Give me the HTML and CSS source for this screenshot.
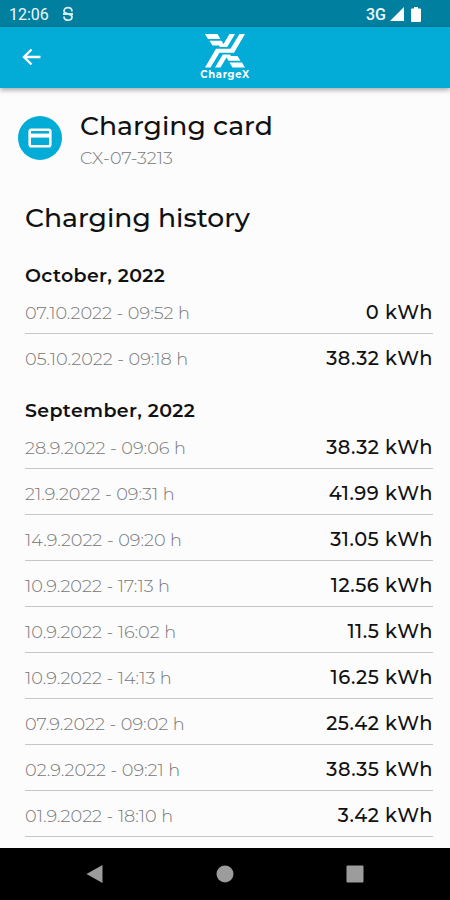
FILE: index.html
```html
<!DOCTYPE html>
<html lang="en">
<head>
  <meta charset="UTF-8">
  <title>ChargeX - Charging card</title>
  <link rel="stylesheet" href="styles.css">
</head>
<body>

<div class="status-bar">
  <span class="time">12:06</span>
  <svg class="status-icon" width="12" height="16" viewBox="0 0 12 16" fill="none" stroke="#d5edf4" stroke-width="1.8">
    <path d="M10 5.500C10 3 8.500 1.700 6 1.700S2 3 2 5.200C2 8.500 10 7 10 10.700c0 2.300-1.600 3.500-4 3.500s-4-1.300-4-3.700M1 8h10"/>
  </svg>
  <span class="network">3G</span>
  <svg class="signal" width="14" height="14" viewBox="0 0 14 14"><path d="M14 0v14H0z" fill="#fff"/></svg>
  <svg class="battery" width="10" height="15" viewBox="0 0 10 15"><path d="M3 0h4v1.500h2q1 0 1 1V14q0 1-1 1H1q-1 0-1-1V2.500q0-1 1-1h2z" fill="#fff"/></svg>
</div>

<header class="app-bar">
  <svg class="back" width="20" height="18" viewBox="0 0 20 18" fill="none" stroke="#fff" stroke-width="2.4">
    <path d="M18.500 9H2M9.500 1.500L2 9l7.500 7.500"/>
  </svg>
  <div class="logo">
    <svg width="40" height="34" viewBox="0 0 40 34" fill="#fff">
      <path d="M0 0h12.500L15.500 5H3z"/>
      <path d="M4.500 6.800h12l2 3.200L24.500 0h5.500l-7.800 13H15l-1-1.500H7.500z"/>
      <path d="M34.500 0H40L29 18.800H14.500L5.500 33.500H0L11 14.700h14.500z"/>
      <path d="M35.500 26.700h-12l-2-3.200-6 10H10l7.800-13H25l1 1.500h6.500z"/>
      <path d="M40 33.500H27.500l-3-5H37z"/>
    </svg>
    <span>ChargeX</span>
  </div>
</header>

<main class="content">
  <div class="card-info">
    <div class="card-icon">
      <svg width="24" height="20" viewBox="0 0 24 20">
        <rect x="1.700" y="1.700" width="20.600" height="16.600" rx="1.800" fill="none" stroke="#fff" stroke-width="2.600"/>
        <path d="M2 5.600h20v4H2z" fill="#fff"/>
      </svg>
    </div>
    <div>
      <h1>Charging card</h1>
      <p class="card-id">CX-07-3213</p>
    </div>
  </div>

  <h2>Charging history</h2>

  <section class="month">
    <h3>October, 2022</h3>
    <div class="entry"><span class="date">07.10.2022 - 09:52 h</span><span class="energy">0 kWh</span></div>
    <div class="entry"><span class="date">05.10.2022 - 09:18 h</span><span class="energy">38.32 kWh</span></div>
  </section>

  <section class="month september">
    <h3>September, 2022</h3>
    <div class="entry"><span class="date">28.9.2022 - 09:06 h</span><span class="energy">38.32 kWh</span></div>
    <div class="entry"><span class="date">21.9.2022 - 09:31 h</span><span class="energy">41.99 kWh</span></div>
    <div class="entry"><span class="date">14.9.2022 - 09:20 h</span><span class="energy">31.05 kWh</span></div>
    <div class="entry"><span class="date">10.9.2022 - 17:13 h</span><span class="energy">12.56 kWh</span></div>
    <div class="entry"><span class="date">10.9.2022 - 16:02 h</span><span class="energy">11.5 kWh</span></div>
    <div class="entry"><span class="date">10.9.2022 - 14:13 h</span><span class="energy">16.25 kWh</span></div>
    <div class="entry"><span class="date">07.9.2022 - 09:02 h</span><span class="energy">25.42 kWh</span></div>
    <div class="entry"><span class="date">02.9.2022 - 09:21 h</span><span class="energy">38.35 kWh</span></div>
    <div class="entry"><span class="date">01.9.2022 - 18:10 h</span><span class="energy">3.42 kWh</span></div>
  </section>
</main>

<nav class="nav-bar">
  <svg width="18" height="18" viewBox="0 0 18 18"><path d="M16.500 0v18L.5 9z" fill="#9c9c9c"/></svg>
  <svg width="18" height="18" viewBox="0 0 18 18"><circle cx="9" cy="9" r="8.500" fill="#9c9c9c"/></svg>
  <svg width="18" height="18" viewBox="0 0 18 18"><rect x=".5" y=".5" width="17" height="17" rx="1" fill="#9c9c9c"/></svg>
</nav>

</body>
</html>
```
FILE: styles.css
```css
* {
  box-sizing: border-box;
  margin: 0;
  padding: 0;
}

body {
  width: 450px;
  height: 900px;
  display: flex;
  flex-direction: column;
  overflow: hidden;
  background: #fcfcfc;
  color: #111;
  font-family: Montserrat, Inter, sans-serif;
}

svg {
  display: block;
  flex: none;
}

.status-bar {
  height: 27px;
  display: flex;
  align-items: center;
  padding: 1px 29px 0 9px;
  background: #007f9f;
  color: #eef8fb;
  font: 400 16px Roboto, sans-serif;
}

.time {
  width: 39px;
}

.status-icon {
  margin-left: 14px;
}

.network {
  margin-left: auto;
  font-weight: 500;
}

.signal {
  margin-left: 4px;
}

.battery {
  margin-left: 7px;
}

.app-bar {
  height: 61px;
  display: grid;
  grid-template-columns: 1fr auto 1fr;
  padding: 7px 22px 0;
  background: #03abd7;
  box-shadow: 0 2px 5px rgba(0, 0, 0, 0.35);
}

.back {
  margin-top: 14px;
}

.logo {
  display: flex;
  flex-direction: column;
  align-items: center;
  color: #fff;
}

.logo span {
  font-size: 10px;
  font-weight: 700;
  line-height: 14px;
  letter-spacing: 0.7px;
}

.content {
  flex: 1;
  padding: 22px 17px 0 25px;
}

.card-info {
  display: flex;
  gap: 18px;
  margin-left: -7px;
}

.card-icon {
  width: 44px;
  height: 44px;
  margin-top: 6px;
  display: flex;
  align-items: center;
  justify-content: center;
  border-radius: 50%;
  background: #03abd7;
}

h1,
h2 {
  font-size: 26.6px;
  font-weight: 500;
  line-height: 32px;
}

.card-id {
  margin-top: 6px;
  color: #777;
  font-size: 17.6px;
  font-weight: 300;
  line-height: 20px;
}

h2 {
  margin-top: 34px;
}

h3 {
  font-size: 19px;
  font-weight: 600;
  line-height: 25px;
  letter-spacing: 0.35px;
}

.month {
  margin-top: 29px;
}

.month.september {
  margin-top: 19px;
}

.september h3 {
  line-height: 24px;
}

.entry {
  height: 46px;
  display: flex;
  align-items: center;
  justify-content: space-between;
  padding-top: 3px;
  border-bottom: 1px solid #c6c6c6;
}

.month:not(.september) .entry:last-child {
  border-bottom-color: transparent;
}

.date {
  color: #777;
  font-size: 17.7px;
  font-weight: 300;
}

.energy {
  font-size: 19.4px;
  font-weight: 500;
  letter-spacing: 0.5px;
}

.nav-bar {
  height: 52px;
  display: flex;
  align-items: center;
  justify-content: space-between;
  padding: 0 86px;
  background: #000;
}
```
